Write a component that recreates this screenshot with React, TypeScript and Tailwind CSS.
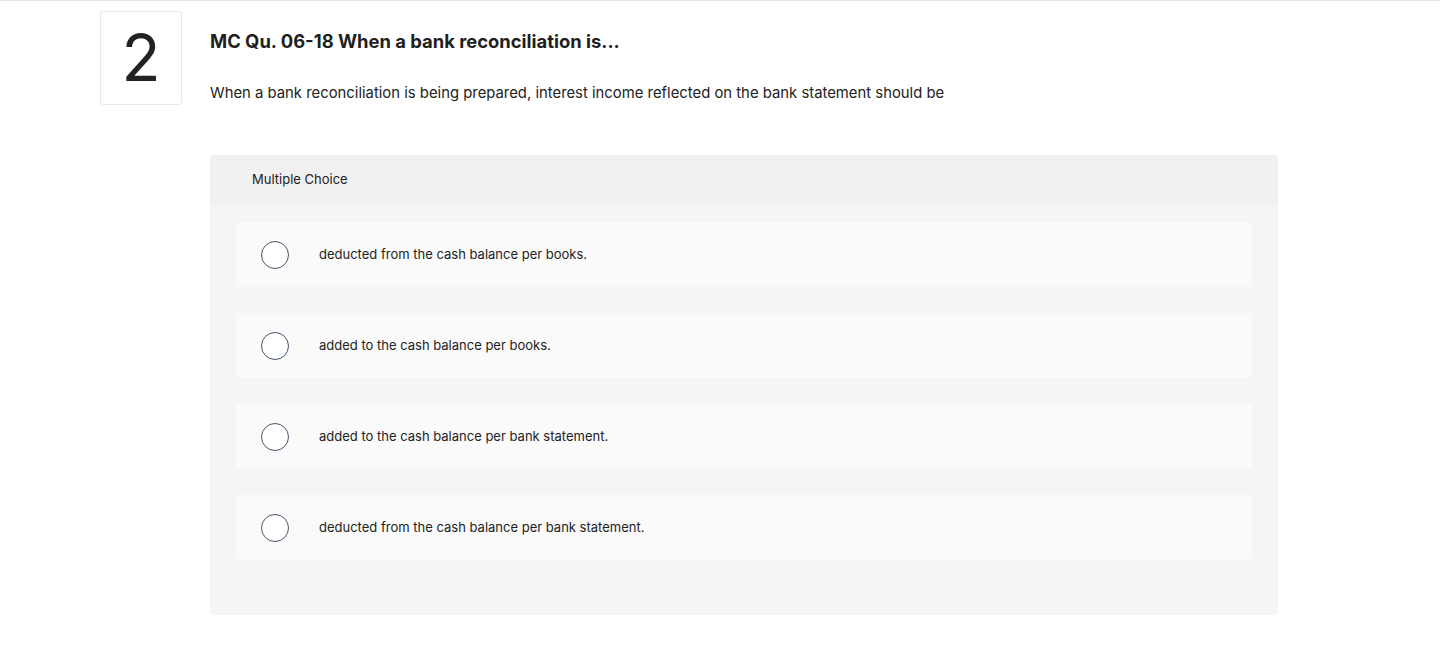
import React from "react";

const choices = [
  "deducted from the cash balance per books.",
  "added to the cash balance per books.",
  "added to the cash balance per bank statement.",
  "deducted from the cash balance per bank statement.",
];

export default function App() {
  return (
    <div className="min-h-[646px] w-[1440px] border-t border-[#e6e6e6] bg-white font-['Inter',sans-serif] text-[#222]">
      <div className="flex pt-[10px] pl-[100px]">
        <div className="flex h-[94px] w-[82px] shrink-0 items-center justify-center rounded-[3px] border border-[#e8e8e8] text-[64px] leading-none font-normal text-[#222]">
          2
        </div>
        <div className="ml-[28px] w-[1068px]">
          <h2 className="mt-[18px] text-[18.4px] leading-[24px] font-bold text-[#1f1f1f]">
            MC Qu. 06-18 When a bank reconciliation is...
          </h2>
          <p className="mt-[30px] text-[14.85px] leading-[20px] text-[#222]">
            When a bank reconciliation is being prepared, interest income reflected on the bank statement should be
          </p>
          <div className="mt-[52px] rounded-[3px] bg-[#f5f5f5] pb-[55px]">
            <div className="flex h-[50px] items-center rounded-t-[3px] bg-[#f0f0f0] pl-[42px] text-[13px] text-[#222]">
              Multiple Choice
            </div>
            <div className="flex flex-col gap-[26px] px-[26px] pt-[17px]">
              {choices.map((c) => (
                <div key={c} className="flex h-[65px] items-center rounded-[2px] bg-[#fafafa]">
                  <span className="ml-[25px] h-[28px] w-[28px] rounded-full border border-[#45556c] bg-white" />
                  <span className="ml-[30px] mt-[1px] text-[13px] text-[#222]">{c}</span>
                </div>
              ))}
            </div>
          </div>
        </div>
      </div>
    </div>
  );
}
